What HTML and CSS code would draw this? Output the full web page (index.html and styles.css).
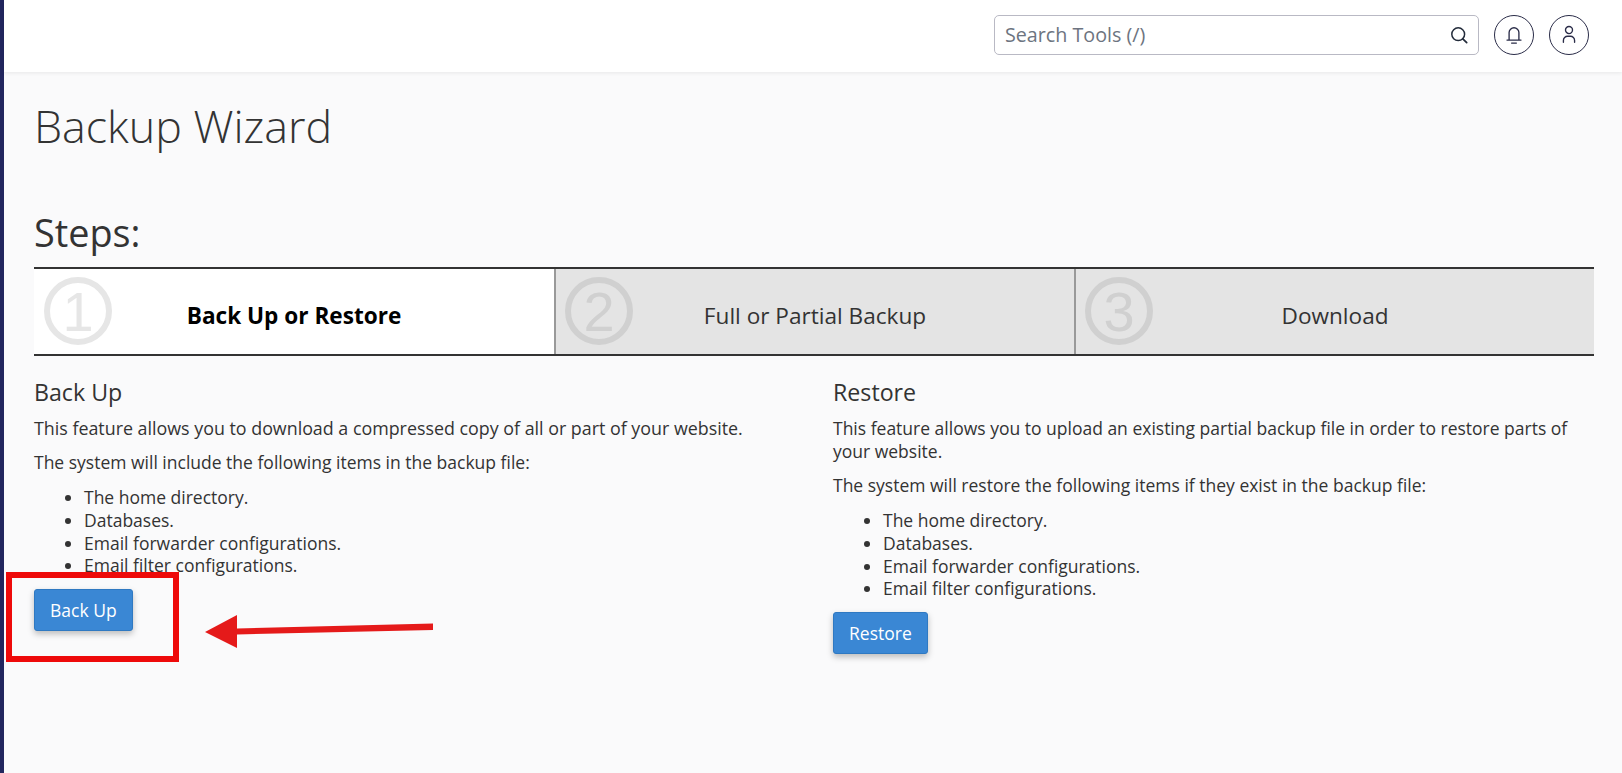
FILE: index.html
```html
<!DOCTYPE html>
<html lang="en">
<head>
<meta charset="utf-8">
<title>Backup Wizard</title>
<link rel="stylesheet" href="styles.css">
</head>
<body>
<div class="app">
  <aside class="rail"></aside>
  <div class="main">
    <header class="topbar">
      <div class="search">
        <span class="search-text">Search Tools (/)</span>
        <svg class="search-icon" viewBox="0 0 20 20" width="20" height="20"><circle cx="9.2" cy="9.2" r="6.4" fill="none" stroke="#222b3a" stroke-width="1.5"/><path d="M13.8 13.8l3.900 3.900" stroke="#222b3a" stroke-width="1.7" stroke-linecap="round"/></svg>
      </div>
      <button class="round">
        <svg viewBox="0 0 20 20" width="28" height="28"><path d="M5 13.600h10M6.500 13.600V8.300a3.500 3.500 0 0 1 7 0v5.300M8.300 15.800h3.400" fill="none" stroke="#2a2c48" stroke-width=".95" stroke-linecap="round"/></svg>
      </button>
      <button class="round">
        <svg viewBox="0 0 20 20" width="26" height="26"><circle cx="10" cy="6.200" r="2.700" fill="none" stroke="#2a2c48" stroke-width="1.050"/><path d="M5.700 15.600v-1.400a3.200 3.200 0 0 1 3.200-3.200h2.200a3.200 3.200 0 0 1 3.200 3.200v1.400" fill="none" stroke="#2a2c48" stroke-width="1.050" stroke-linecap="round"/></svg>
      </button>
    </header>
    <main class="content">
      <h1 class="title">Backup Wizard</h1>
      <h2 class="steps-title">Steps:</h2>
      <div class="steps">
        <div class="step step-active">
          <svg class="step-num" viewBox="0 0 68 68" width="68" height="68"><circle cx="34" cy="34" r="31"/><text x="34" y="54">1</text></svg>
          <span>Back Up or Restore</span>
        </div>
        <div class="step">
          <svg class="step-num" viewBox="0 0 68 68" width="68" height="68"><circle cx="34" cy="34" r="31"/><text x="34" y="54">2</text></svg>
          <span>Full or Partial Backup</span>
        </div>
        <div class="step">
          <svg class="step-num" viewBox="0 0 68 68" width="68" height="68"><circle cx="34" cy="34" r="31"/><text x="34" y="54">3</text></svg>
          <span>Download</span>
        </div>
      </div>
      <div class="columns">
        <section>
          <h3>Back Up</h3>
          <p class="lead">This feature allows you to download a compressed copy of all or part of your website.</p>
          <p>The system will include the following items in the backup file:</p>
          <ul>
            <li>The home directory.</li>
            <li>Databases.</li>
            <li>Email forwarder configurations.</li>
            <li>Email filter configurations.</li>
          </ul>
          <button class="btn">Back Up</button>
        </section>
        <section>
          <h3>Restore</h3>
          <p>This feature allows you to upload an existing partial backup file in order to restore parts of your website.</p>
          <p>The system will restore the following items if they exist in the backup file:</p>
          <ul>
            <li>The home directory.</li>
            <li>Databases.</li>
            <li>Email forwarder configurations.</li>
            <li>Email filter configurations.</li>
          </ul>
          <button class="btn">Restore</button>
        </section>
      </div>
    </main>
  </div>
</div>
<div class="callout-box"></div>
<svg class="callout-arrow" viewBox="0 0 240 40" width="240" height="40"><path d="M228 8.500L32 13.500V0L0 17l32 16V19.500L228 15z" fill="#e51a1a"/></svg>
</body>
</html>
```
FILE: styles.css
```css
* { box-sizing: border-box; }
html, body { margin: 0; height: 100%; }
body {
  font-family: "Open Sans", "Liberation Sans", sans-serif;
  font-size: 17.5px;
  color: #333;
  background: #fafafb;
  overflow: hidden;
}
.app { display: flex; height: 773px; }
.rail { width: 4px; flex: none; background: #22265e; }
.main { flex: 1; min-width: 0; }
.topbar {
  height: 72px;
  background: #fff;
  box-shadow: 0 1px 4px rgba(0, 0, 0, .08);
  display: flex;
  align-items: center;
  justify-content: flex-end;
  gap: 15px;
  padding: 0 33px 2px 0;
}
.search {
  width: 485px;
  height: 40px;
  border: 1px solid #b9b9c4;
  border-radius: 5px;
  display: flex;
  align-items: center;
  justify-content: space-between;
  padding: 0 9px 0 10px;
}
.search-text { font-size: 19.7px; color: #6d7480; margin-top: -2px; }
.round {
  width: 40px;
  height: 40px;
  padding: 0;
  border: 1px solid #2a2c48;
  border-radius: 50%;
  background: #fff;
  display: flex;
  align-items: center;
  justify-content: center;
}
.content { padding: 0 28px 0 30px; }
.title {
  margin: 24px 0 0;
  font-size: 44.8px;
  font-weight: 300;
  line-height: 60px;
  color: #333;
}
.steps-title {
  margin: 52px 0 0;
  font-size: 37.8px;
  font-weight: 500;
  line-height: 50px;
  color: #333;
}
.steps {
  margin-top: 9px;
  height: 89px;
  display: grid;
  grid-template-columns: 520px 520px 1fr;
  border-top: 2px solid #333;
  border-bottom: 2px solid #333;
}
.step {
  position: relative;
  background: #e4e4e4;
  border-left: 2px solid #999;
  display: flex;
  align-items: center;
  justify-content: center;
  padding-top: 8px;
  font-size: 22.6px;
}
.step-active {
  background: #fff;
  border-left: 0;
  font-weight: 700;
  color: #000;
}
.step-num { position: absolute; left: 9px; top: 8px; }
.step-active .step-num { left: 10px; }
.step-num circle { fill: none; stroke: #d0d0d0; stroke-width: 6; }
.step-num text { font-family: "Liberation Sans", sans-serif; font-size: 56px; font-weight: 400; text-anchor: middle; fill: #d0d0d0; }
.step-active .step-num circle { stroke: #e6e6e6; }
.step-active .step-num text { fill: #e6e6e6; }
.columns {
  display: grid;
  grid-template-columns: 761px 761px;
  column-gap: 38px;
  margin-top: 20px;
}
h3 { margin: 0 0 9px; font-size: 23.2px; font-weight: 400; line-height: 32px; }
p { margin: 0 0 11px; line-height: 23px; }
p:last-of-type { margin-bottom: 12px; }
.lead { font-size: 17.85px; }
ul { margin: 0 0 12px; padding-left: 50px; line-height: 22.8px; }
.btn {
  height: 42px;
  padding: 0 15px;
  font: 400 17.5px "Open Sans", "Liberation Sans", sans-serif;
  color: #fff;
  background: #3a87d4;
  border: 1px solid #2f79c2;
  border-radius: 3px;
  box-shadow: 0 3px 6px rgba(0, 0, 0, .25);
}
.callout-box {
  position: absolute;
  left: 6px;
  top: 572px;
  width: 173px;
  height: 90px;
  border: 6px solid #ee0a0a;
}
.callout-arrow { position: absolute; left: 205px; top: 615px; }
```
